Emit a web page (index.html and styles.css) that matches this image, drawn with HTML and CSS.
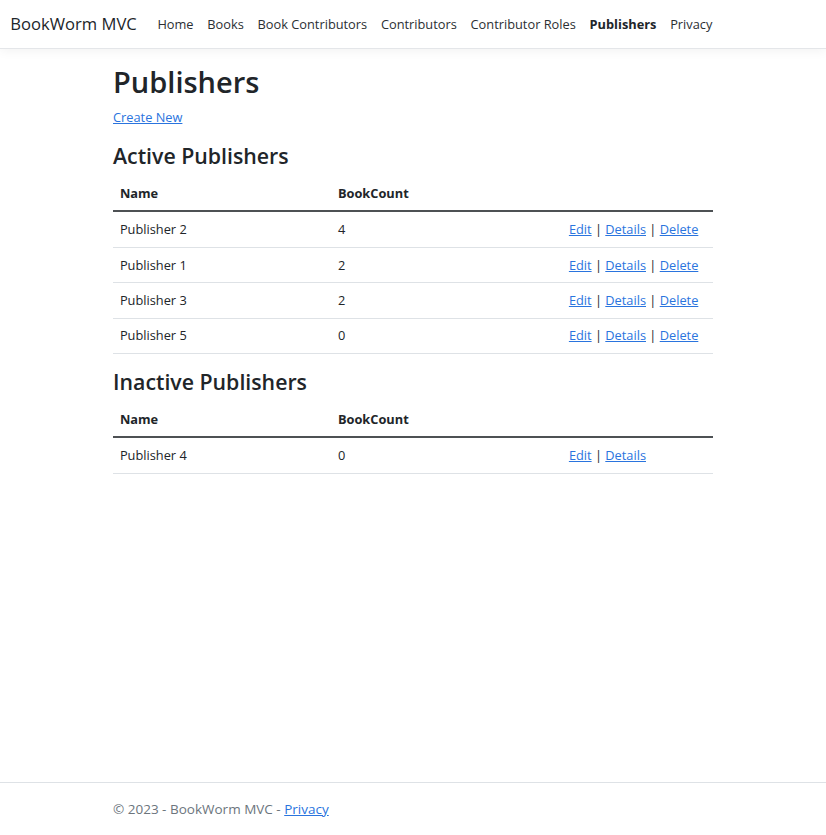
FILE: index.html
```html
<!DOCTYPE html>
<html lang="en">
<head>
<meta charset="utf-8">
<title>Publishers - BookWorm MVC</title>
<link rel="stylesheet" href="styles.css">
</head>
<body>
<header>
  <nav class="navbar">
    <a class="brand" href="#">BookWorm MVC</a>
    <ul class="nav">
      <li><a class="nav-link" href="#">Home</a></li>
      <li><a class="nav-link" href="#">Books</a></li>
      <li><a class="nav-link" href="#">Book Contributors</a></li>
      <li><a class="nav-link" href="#">Contributors</a></li>
      <li><a class="nav-link" href="#">Contributor Roles</a></li>
      <li><a class="nav-link active" href="#">Publishers</a></li>
      <li><a class="nav-link" href="#">Privacy</a></li>
    </ul>
  </nav>
</header>
<main class="container">
  <h1 class="title">Publishers</h1>
  <p class="create"><a href="#">Create New</a></p>

  <h3 class="section">Active Publishers</h3>
  <table class="table">
    <thead>
      <tr><th class="c-name">Name</th><th class="c-count">BookCount</th><th class="c-act"></th></tr>
    </thead>
    <tbody>
      <tr><td>Publisher 2</td><td>4</td><td class="actions"><a href="#">Edit</a> | <a href="#">Details</a> | <a href="#">Delete</a></td></tr>
      <tr><td>Publisher 1</td><td>2</td><td class="actions"><a href="#">Edit</a> | <a href="#">Details</a> | <a href="#">Delete</a></td></tr>
      <tr><td>Publisher 3</td><td>2</td><td class="actions"><a href="#">Edit</a> | <a href="#">Details</a> | <a href="#">Delete</a></td></tr>
      <tr><td>Publisher 5</td><td>0</td><td class="actions"><a href="#">Edit</a> | <a href="#">Details</a> | <a href="#">Delete</a></td></tr>
    </tbody>
  </table>

  <h3 class="section">Inactive Publishers</h3>
  <table class="table">
    <thead>
      <tr><th class="c-name">Name</th><th class="c-count">BookCount</th><th class="c-act"></th></tr>
    </thead>
    <tbody>
      <tr><td>Publisher 4</td><td>0</td><td class="actions"><a href="#">Edit</a> | <a href="#">Details</a></td></tr>
    </tbody>
  </table>
</main>
<footer class="footer">
  <div class="container footer-inner">&copy; 2023 - BookWorm MVC - <a href="#">Privacy</a></div>
</footer>
</body>
</html>
```
FILE: styles.css
```css
* { box-sizing: border-box; }
html, body { margin: 0; padding: 0; }
body {
  font-family: "Open Sans", "Noto Sans", "Liberation Sans", sans-serif;
  font-size: 12.8px;
  line-height: 20.64px;
  color: #212529;
  background: #fff;
  min-height: 100vh;
  display: flex;
  flex-direction: column;
}
a { color: #2a74de; text-decoration: underline; }

.navbar {
  display: flex;
  align-items: center;
  padding: 6.88px 10.32px;
  border-bottom: 1px solid #e4e6e9;
  box-shadow: 0 3.44px 10.32px rgba(0,0,0,.05);
  margin-bottom: 13.76px;
}
.brand {
  font-size: 16.6px;
  line-height: 25.8px;
  padding: 4.3px 0;
  margin-right: 13.76px;
  color: #212529;
  text-decoration: none;
  white-space: nowrap;
}
.nav { display: flex; list-style: none; margin: 0; padding: 0; }
.nav-link {
  display: block;
  padding: 6.88px 6.88px;
  color: #2b2f33;
  text-decoration: none;
}
.nav-link.active { font-weight: 700; color: #212529; }

.container {
  width: 100%;
  max-width: 624px;
  padding: 0 12px;
  margin: 0 auto;
}
main.container { padding-bottom: 13.76px; }

.title {
  font-size: 29px;
  font-weight: 600;
  line-height: 37.6px;
  margin: 0 0 6.88px;
}
.create { margin: 0 0 13.76px; }
.section {
  font-size: 21.3px;
  font-weight: 600;
  line-height: 27.4px;
  margin: 0 0 6.88px;
}

.table {
  width: 100%;
  border-collapse: collapse;
  margin-bottom: 13.76px;
  table-layout: fixed;
}
.table th, .table td {
  padding: 6.88px;
  text-align: left;
  vertical-align: top;
  border-bottom: 1px solid #dee2e6;
}
.table th { font-weight: 700; }
.table thead th { border-bottom: 2px solid #4d5154; }
.actions { white-space: nowrap; }
.c-name { width: 218px; }
.c-count { width: 231px; }
.c-act { width: 151px; }

.footer {
  margin-top: auto;
  border-top: 1px solid #dee2e6;
  color: #6c757d;
  font-size: 13.5px;
  line-height: 52px;
  white-space: nowrap;
}
```
